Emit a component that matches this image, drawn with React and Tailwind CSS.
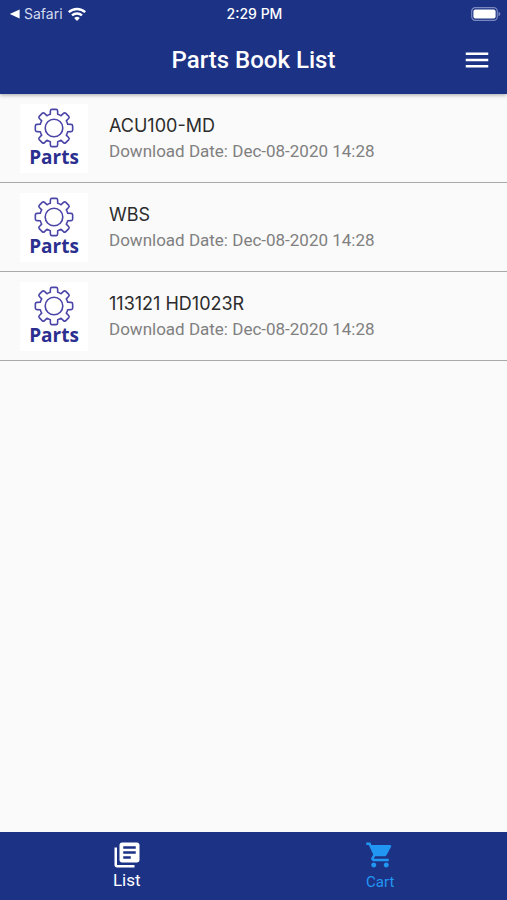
import React from "react";
import { MdMenu, MdLibraryBooks, MdShoppingCart } from "react-icons/md";

const books = [
  { name: "ACU100-MD", date: "Dec-08-2020 14:28" },
  { name: "WBS", date: "Dec-08-2020 14:28" },
  { name: "113121 HD1023R", date: "Dec-08-2020 14:28" },
];

const point = (radius, degrees) => {
  const a = ((degrees - 90) * Math.PI) / 180;
  return `${(20 + radius * Math.cos(a)).toFixed(2)} ${(20 + radius * Math.sin(a)).toFixed(2)}`;
};

// Eight teeth, each one a root corner, a tip with rounded corners and a root corner.
const gearPath =
  [0, 45, 90, 135, 180, 225, 270, 315]
    .map(
      (t, i) =>
        `${i === 0 ? "M" : "A14 14 0 0 1 "}${point(14.2, t - 15)} L${point(17.4, t - 12)} Q${point(18.9, t - 11)} ${point(18.8, t - 7)} L${point(18.8, t + 7)} Q${point(18.9, t + 11)} ${point(17.4, t + 12)} L${point(14.2, t + 15)}`
    )
    .join(" ") + ` A14 14 0 0 1 ${point(14.2, -15)} Z`;

function PartsThumb() {
  return (
    <div className="flex h-[69px] w-[68px] shrink-0 flex-col items-center bg-white pt-1 text-[#2b2f8f]">
      <svg viewBox="0 0 40 40" className="size-10 shrink-0" fill="none" stroke="#4a45a6" strokeWidth="1.6" strokeLinejoin="round" aria-hidden="true">
        <path d={gearPath} />
        <circle cx="20" cy="20" r="8.8" />
      </svg>
      <span className="font-['Open_Sans',sans-serif] text-[19px] leading-[18px] font-bold">Parts</span>
    </div>
  );
}

function StatusBar() {
  return (
    <div className="grid h-7 grid-cols-3 items-center pr-1.5 pl-2 font-['Inter',sans-serif] text-sm leading-4">
      <div className="flex items-center gap-1">
        <svg viewBox="0 0 12 12" className="size-3" fill="currentColor" aria-hidden="true">
          <path d="M1.8 6 11.6 1.4v9.2z" />
        </svg>
        <span className="text-[#d5daf0]">Safari</span>
        <svg viewBox="0 0 20 16" className="h-4 w-5" fill="none" stroke="currentColor" strokeWidth="2.4" aria-hidden="true">
          <path d="M1.8 6.2a12 12 0 0 1 16.4 0M5 9.4a7.4 7.4 0 0 1 10 0" />
          <path d="M10 15 7.2 12a4.2 4.2 0 0 1 5.6 0z" fill="currentColor" stroke="none" />
        </svg>
      </div>
      <span className="text-center font-medium">2:29 PM</span>
      <svg viewBox="0 0 30 14" className="h-3.5 w-[30px] justify-self-end" aria-hidden="true">
        <rect x="0.7" y="0.7" width="25.6" height="12.6" rx="3.6" fill="none" stroke="#7b88bf" strokeWidth="1.2" />
        <rect x="2.4" y="2.4" width="22.2" height="9.2" rx="2" fill="#fff" />
        <path d="M27.5 4.8c2.4.8 2.4 3.6 0 4.4z" fill="#7b88bf" />
      </svg>
    </div>
  );
}

export default function App() {
  return (
    <div className="flex h-screen flex-col bg-[#fafafa] font-['Roboto',sans-serif]">
      <header className="z-10 shrink-0 bg-[#1c3285] pb-0.5 text-white shadow-[0_1px_4px_rgba(0,0,0,0.35)]">
        <StatusBar />
        <div className="grid h-16 grid-cols-[48px_1fr_48px] items-center px-1.5">
          <h1 className="col-start-2 text-center text-2xl leading-8 font-medium">Parts Book List</h1>
          <button type="button" aria-label="Menu" className="flex size-12 items-center justify-center">
            <MdMenu size={30} />
          </button>
        </div>
      </header>

      <main className="flex-1 overflow-y-auto">
        <ul>
          {books.map((book) => (
            <li key={book.name} className="border-b border-[#a8a8a8]">
              <a href="#book" className="flex h-22 items-center gap-[21px] px-5">
                <PartsThumb />
                <div>
                  <p className="font-['Inter',sans-serif] text-lg leading-[26px] text-[#2c2c2c]">{book.name}</p>
                  <p className="text-[17px] leading-6 text-[#808080]">Download Date: {book.date}</p>
                </div>
              </a>
            </li>
          ))}
        </ul>
      </main>

      <nav className="grid h-[68px] shrink-0 grid-cols-2 bg-[#1c3285]">
        <a href="#list" aria-current="page" className="flex flex-col items-center pt-2 text-white">
          <MdLibraryBooks size={30} />
          <span className="text-[17px] leading-5">List</span>
        </a>
        <a href="#cart" className="flex flex-col items-center pt-2 text-[#2196f3]">
          <MdShoppingCart size={30} />
          <span className="text-[15px] leading-6">Cart</span>
        </a>
      </nav>
    </div>
  );
}
